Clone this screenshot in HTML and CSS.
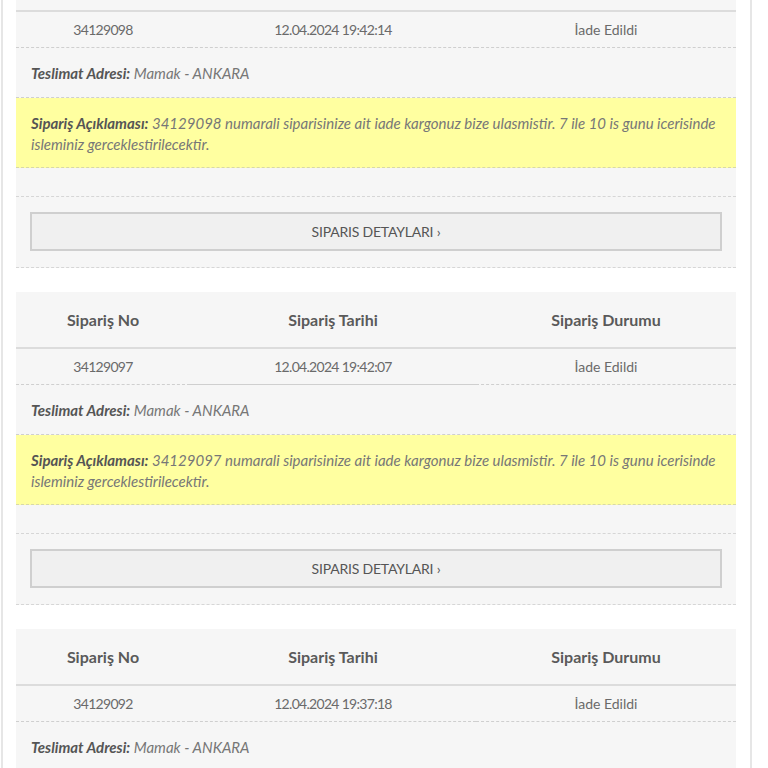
FILE: index.html
```html
<!DOCTYPE html>
<html lang="tr">
<head>
<meta charset="utf-8">
<title>Siparişlerim</title>
<link rel="stylesheet" href="styles.css">
</head>
<body>
<div class="page">
  <div class="order">
    <div class="row head">
      <div class="c1">Sipariş No</div>
      <div class="c2">Sipariş Tarihi</div>
      <div class="c3">Sipariş Durumu</div>
    </div>
    <div class="row data">
      <div class="c1">34129098</div>
      <div class="c2">12.04.2024 19:42:14</div>
      <div class="c3">İade Edildi</div>
    </div>
    <div class="addr"><b>Teslimat Adresi:</b> Mamak - ANKARA</div>
    <div class="note"><b>Sipariş Açıklaması:</b> 34129098 numarali siparisinize ait iade kargonuz bize ulasmistir. 7 ile 10 is gunu icerisinde isleminiz gerceklestirilecektir.</div>
    <div class="spacer"></div>
    <div class="actions"><button class="btn">SIPARIS DETAYLARI ›</button></div>
  </div>

  <div class="order">
    <div class="row head">
      <div class="c1">Sipariş No</div>
      <div class="c2">Sipariş Tarihi</div>
      <div class="c3">Sipariş Durumu</div>
    </div>
    <div class="row data">
      <div class="c1">34129097</div>
      <div class="c2 active">12.04.2024 19:42:07</div>
      <div class="c3">İade Edildi</div>
    </div>
    <div class="addr"><b>Teslimat Adresi:</b> Mamak - ANKARA</div>
    <div class="note"><b>Sipariş Açıklaması:</b> 34129097 numarali siparisinize ait iade kargonuz bize ulasmistir. 7 ile 10 is gunu icerisinde isleminiz gerceklestirilecektir.</div>
    <div class="spacer"></div>
    <div class="actions"><button class="btn">SIPARIS DETAYLARI ›</button></div>
  </div>

  <div class="order">
    <div class="row head">
      <div class="c1">Sipariş No</div>
      <div class="c2">Sipariş Tarihi</div>
      <div class="c3">Sipariş Durumu</div>
    </div>
    <div class="row data">
      <div class="c1">34129092</div>
      <div class="c2">12.04.2024 19:37:18</div>
      <div class="c3">İade Edildi</div>
    </div>
    <div class="addr"><b>Teslimat Adresi:</b> Mamak - ANKARA</div>
    <div class="note"><b>Sipariş Açıklaması:</b> 34129092 numarali siparisinize ait iade kargonuz bize ulasmistir. 7 ile 10 is gunu icerisinde isleminiz gerceklestirilecektir.</div>
  </div>
</div>
</body>
</html>
```
FILE: styles.css
```css
html, body {
  margin: 0;
  padding: 0;
  background: #ffffff;
  height: 100%;
  overflow: hidden;
}
body {
  font-family: Lato, "Open Sans", sans-serif;
  color: #666;
}
.page {
  margin-left: 1px;
  width: 720px;
  min-height: 900px;
  border-left: 2px solid #e6e6e6;
  border-right: 2px solid #e6e6e6;
  padding: 0 14px 0 13px;
  margin-top: -45px;
  display: flex;
  flex-direction: column;
  gap: 24px;
}
.order {
  background: #f6f6f6;
  display: flex;
  flex-direction: column;
}
.row {
  display: grid;
  grid-template-columns: 174px 286px 260px;
  text-align: center;
}
.head {
  height: 57px;
  box-sizing: border-box;
  align-items: center;
  font-size: 16px;
  font-weight: 700;
  color: #5a5a5a;
  border-bottom: 2px solid #dcdcdc;
}
.data {
  font-size: 14px;
  letter-spacing: -0.7px;
  color: #6a6a6a;
}
.data .c3 {
  letter-spacing: 0;
}
.data > div {
  height: 35px;
  line-height: 36px;
  border-bottom: 1px dashed #cfcfcf;
}
.data > div.active {
  border-bottom: 1px solid #cfcfcf;
}
.addr {
  height: 50px;
  line-height: 50px;
  padding: 0 15px;
  font-size: 15px;
  font-style: italic;
  color: #777;
  border-bottom: 1px dashed #cfcfcf;
  box-sizing: border-box;
}
.addr b, .note b {
  color: #555;
  font-weight: 700;
}
.note {
  background: #ffffa0;
  height: 70px;
  box-sizing: border-box;
  border-bottom: 1px dashed #d8d8a8;
  padding: 15px 20px 0 15px;
  font-size: 15px;
  line-height: 21px;
  font-style: italic;
  color: #777;
}
.spacer {
  height: 29px;
  border-bottom: 1px dashed #d6d6d6;
  box-sizing: border-box;
}
.actions {
  height: 71px;
  box-sizing: border-box;
  padding: 15px 14px 0;
  border-bottom: 1px dashed #d6d6d6;
}
.btn {
  display: block;
  width: 100%;
  height: 39px;
  background: #f0f0f0;
  border: 2px solid #cfcfcf;
  font-family: Lato, "Open Sans", sans-serif;
  font-size: 14px;
  color: #555;
  letter-spacing: -0.2px;
  cursor: pointer;
}
```
